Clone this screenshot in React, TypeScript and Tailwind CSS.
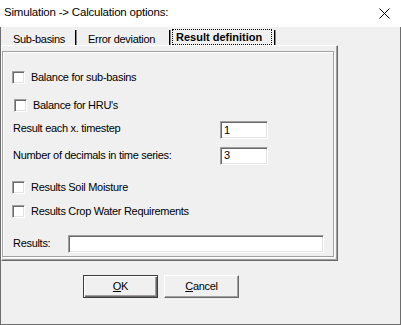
import React from "react";

const sunken =
  "bg-white border border-t-[#a0a0a0] border-l-[#a0a0a0] border-r-white border-b-white shadow-[inset_1px_1px_0_#696969,inset_-1px_-1px_0_#e3e3e3]";

const CheckBox: React.FC<{ label: string; indent: string }> = ({ label, indent }) => (
  <div className={`flex items-center h-[13px] ${indent}`}>
    <span className={`w-[13px] h-[13px] shrink-0 ${sunken}`} />
    <span className="ml-[6px] leading-none">{label}</span>
  </div>
);

const TextBox: React.FC<{ value: string; width: string }> = ({ value, width }) => (
  <div className={`${width} h-[18px] ${sunken} flex items-center pl-[3px] leading-none`}>{value}</div>
);

const Separator = () => (
  <div className="w-[2px] h-[15px] mt-[3px] border-l border-black bg-[#8a8a8a]" />
);

const App: React.FC = () => {
  return (
    <div className="w-[401px] h-[325px] flex flex-col bg-[#f0f0f0] text-black text-[11px] tracking-[-0.3px] font-['Liberation_Sans',Arial,sans-serif] overflow-hidden">
      {/* title bar */}
      <div className="h-[27px] bg-white flex items-center justify-between pl-[4px] pr-[11px]">
        <span className="text-[11.5px] tracking-[-0.2px] pb-[1px]">Simulation -&gt; Calculation options:</span>
        <svg width="11" height="11" viewBox="0 0 11 11" className="mb-[1px]">
          <path d="M0.5 0.5 L10.5 10.5 M10.5 0.5 L0.5 10.5" stroke="#000" strokeWidth="1" fill="none" />
        </svg>
      </div>

      {/* body */}
      <div className="flex-1 flex flex-col border-l border-r border-b border-[#6d6d6d]">
        {/* tab strip */}
        <div className="h-[18px] flex">
          <div className="w-[74px] pl-[12px] pt-[4px]">Sub-basins</div>
          <Separator />
          <div className="w-[92px] pl-[11px] pt-[4px]">Error deviation</div>
          <Separator />
          <div className="w-[103px] pl-[1px] pt-[2px]">
            <div className="w-[100px] h-[16px] border border-dotted border-black font-bold tracking-normal flex items-center pl-[3px]">
              Result definition
            </div>
          </div>
          <Separator />
        </div>

        {/* page */}
        <div className="w-[337px] h-[216px] border-t border-l border-white border-r border-b border-r-[#696969] border-b-[#696969] shadow-[inset_-1px_-1px_0_#a0a0a0] pt-[5px] pr-[3px] pb-[3px]">
          <div className="h-[206px] border border-[#a0a0a0] shadow-[inset_1px_1px_0_#fff,1px_1px_0_#fff] flex flex-col">
            <div className="mt-[19px]">
              <CheckBox label="Balance for sub-basins" indent="pl-[9px]" />
            </div>
            <div className="mt-[15px]">
              <CheckBox label="Balance for HRU's" indent="pl-[11px]" />
            </div>
            <div className="mt-[8px] flex items-center pl-[10px]">
              <span className="w-[207px] pb-[4px]">Result each x. timestep</span>
              <TextBox value="1" width="w-[48px]" />
            </div>
            <div className="mt-[6px] flex items-center pl-[10px]">
              <span className="w-[207px] pb-[2px]">Number of decimals in time series:</span>
              <TextBox value="3" width="w-[48px]" />
            </div>
            <div className="mt-[16px]">
              <CheckBox label="Results Soil Moisture" indent="pl-[9px]" />
            </div>
            <div className="mt-[11px]">
              <CheckBox label="Results Crop Water Requirements" indent="pl-[9px]" />
            </div>
            <div className="mt-[17px] flex items-center pl-[10px]">
              <span className="w-[55px] pb-[2px]">Results:</span>
              <TextBox value="" width="w-[256px]" />
            </div>
          </div>
        </div>

        {/* buttons */}
        <div className="flex gap-[6px] pl-[82px] mt-[14px]">
          <button className="w-[75px] h-[23px] border border-[#3c3c3c] bg-[#f0f0f0] shadow-[inset_1px_1px_0_#fff,inset_-1px_-1px_0_#696969,inset_-2px_-2px_0_#a0a0a0] flex items-center justify-center">
            <span><span className="underline">O</span>K</span>
          </button>
          <button className="w-[75px] h-[23px] border border-t-white border-l-white border-r-[#696969] border-b-[#696969] bg-[#f0f0f0] shadow-[inset_-1px_-1px_0_#a0a0a0] flex items-center justify-center">
            <span><span className="underline">C</span>ancel</span>
          </button>
        </div>
      </div>
    </div>
  );
};

export default App;
